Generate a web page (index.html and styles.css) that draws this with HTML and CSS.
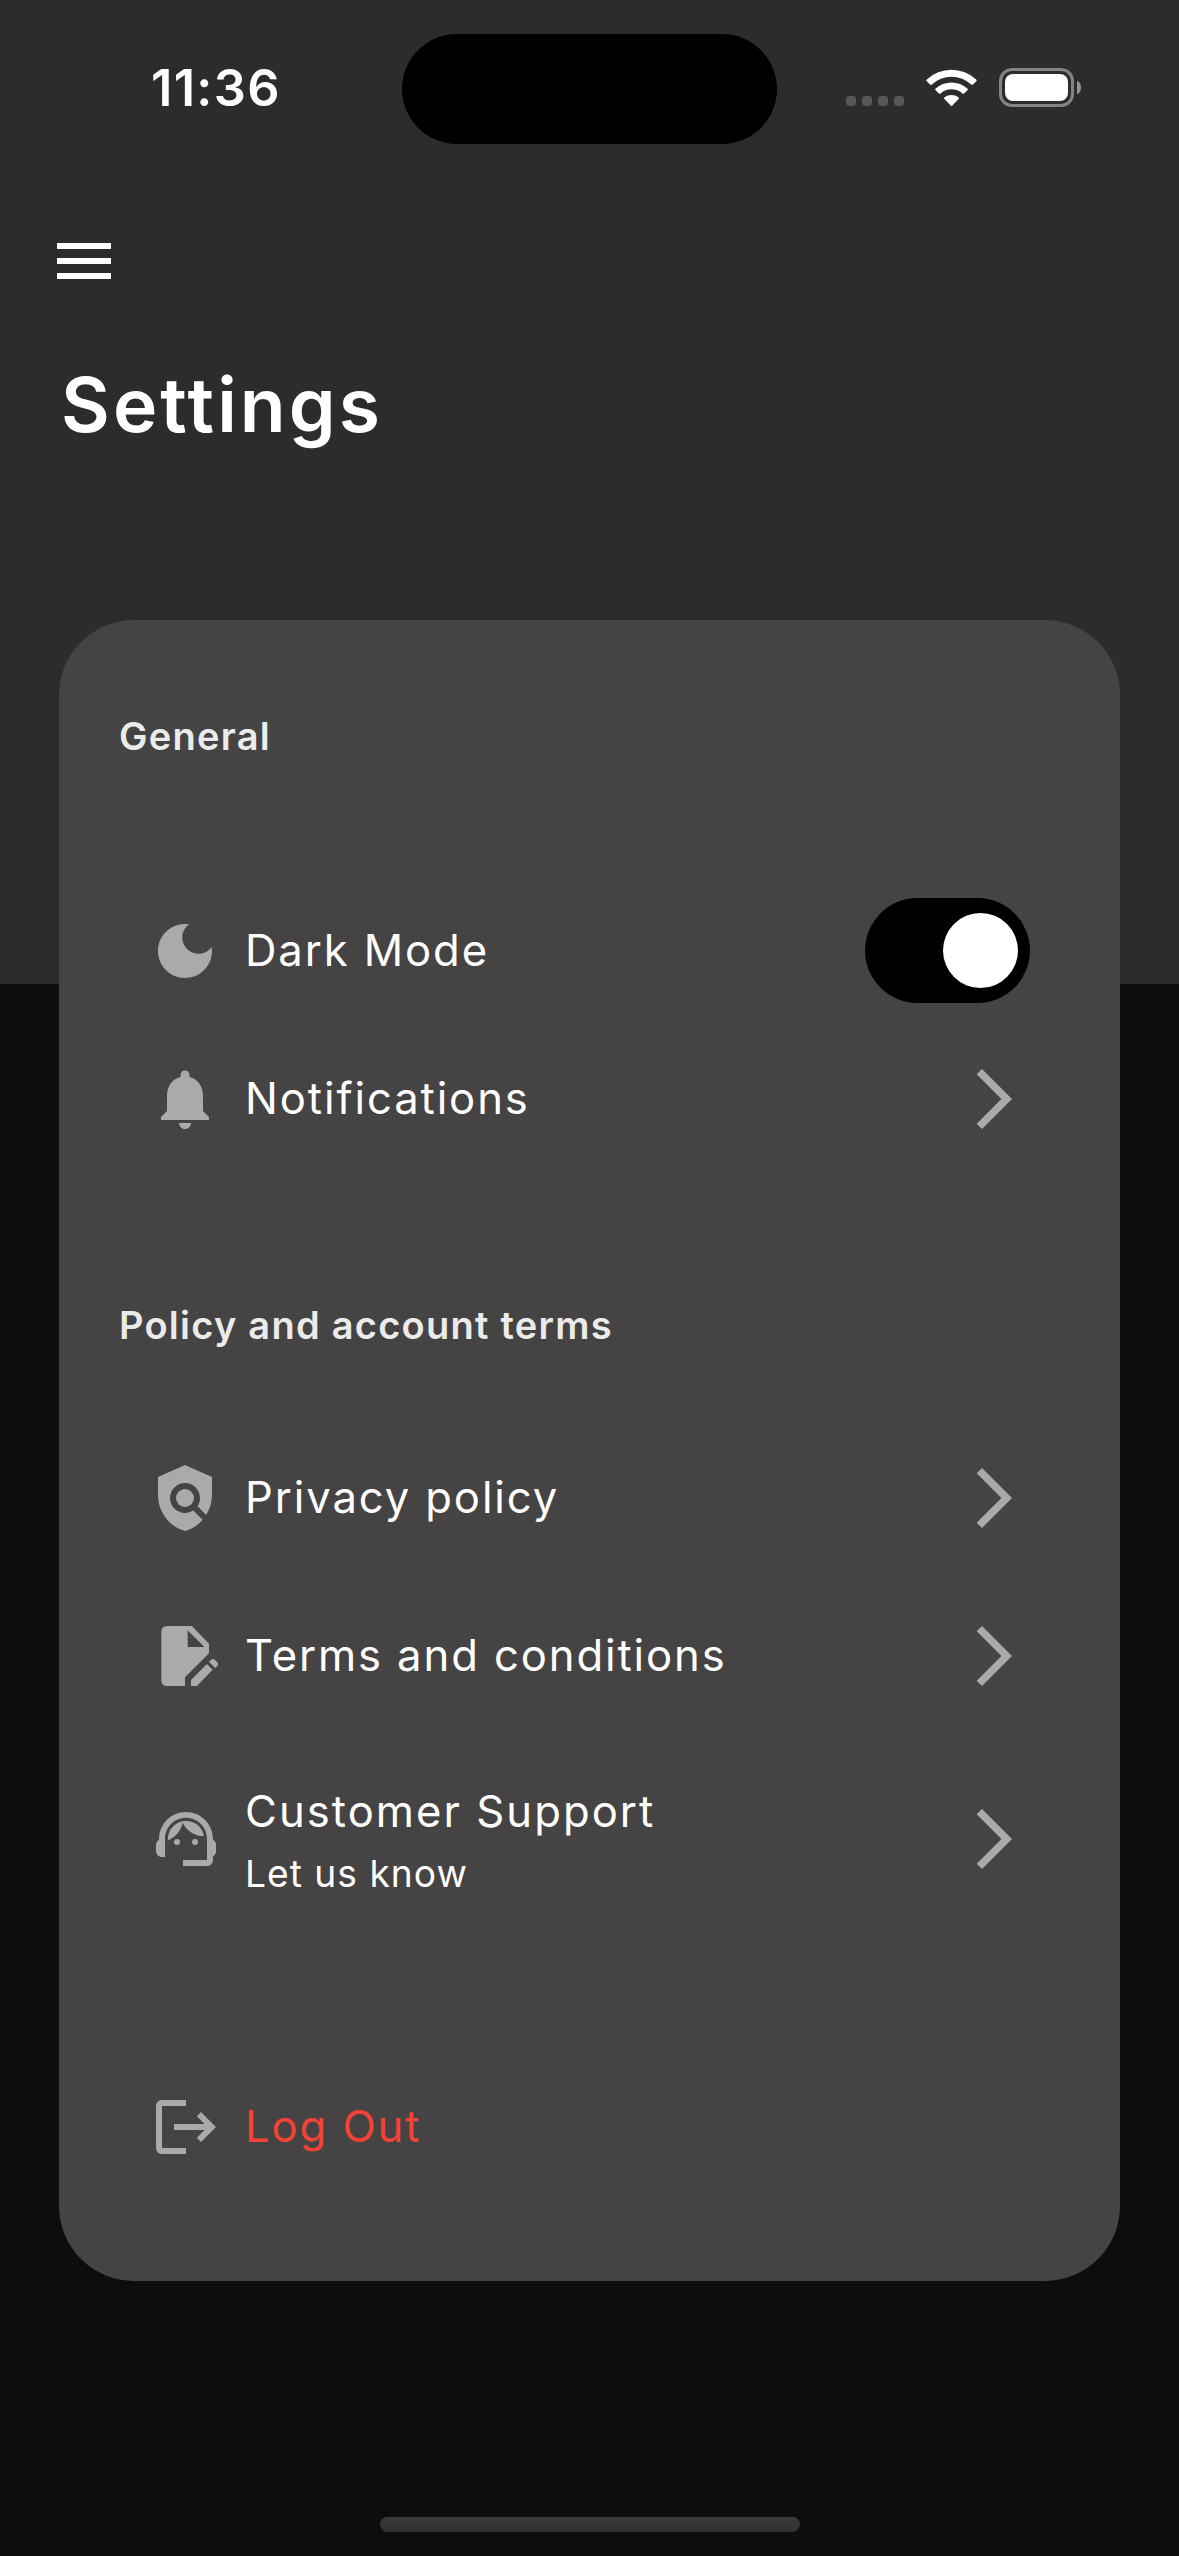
FILE: index.html
```html
<!DOCTYPE html>
<html lang="en">
<head>
<meta charset="utf-8">
<title>Settings</title>
<link rel="stylesheet" href="styles.css">
</head>
<body>
<div class="screen">
  <header class="status">
    <div class="time">11:36</div>
    <div class="island"></div>
    <div class="indicators">
      <div class="dots"><i></i><i></i><i></i><i></i></div>
      <svg class="wifi" viewBox="0 0 51 38">
        <path d="M.8 10.5a36.4 36.4 0 0 1 49.400 0q.9.9 0 1.800l-3.200 3.200q-.9.8-1.800 0a28.700 28.700 0 0 0-39.400 0q-.9.8-1.800 0l-3.200-3.200q-.9-.9 0-1.800z"/>
        <path d="M9.600 19.400a24 24 0 0 1 31.800 0q.9.9 0 1.800l-3.300 3.200q-.8.7-1.700 0a16.300 16.300 0 0 0-21.800 0q-.9.7-1.700 0l-3.300-3.200q-.9-.9 0-1.800z"/>
        <path d="M18.500 28.300a11.500 11.500 0 0 1 14 0q1 .9.100 1.800l-6.200 6.400q-.9.8-1.800 0l-6.200-6.400q-.9-.9.100-1.800z"/>
      </svg>
      <div class="battery"><div class="cell"><div class="charge"></div></div><div class="cap"></div></div>
    </div>
  </header>
  <svg class="menu" viewBox="0 0 24 24"><path d="M3 18h18v-2H3v2zm0-5h18v-2H3v2zm0-7v2h18V6H3z"/></svg>
  <h1 class="title">Settings</h1>
  <main class="card">
    <h2 class="section">General</h2>
    <div class="row dark-mode">
      <svg class="icon" viewBox="0 0 24 24"><path d="M12 3c-4.970 0-9 4.030-9 9s4.030 9 9 9 9-4.030 9-9c0-.46-.04-.92-.1-1.360-.98 1.370-2.580 2.260-4.400 2.260-2.980 0-5.400-2.420-5.400-5.400 0-1.810.89-3.420 2.260-4.400-.44-.06-.9-.1-1.360-.1z"/></svg>
      <span class="label">Dark Mode</span>
      <div class="toggle"><div class="knob"></div></div>
    </div>
    <div class="row notifications">
      <svg class="icon" viewBox="0 0 24 24"><path d="M12 22c1.100 0 2-.9 2-2h-4c0 1.100.89 2 2 2zm6-6v-5c0-3.070-1.640-5.640-4.500-6.320V4c0-.83-.67-1.500-1.500-1.500s-1.500.67-1.500 1.500v.68C7.630 5.360 6 7.920 6 11v5l-2 2v1h16v-1l-2-2z"/></svg>
      <span class="label">Notifications</span>
      <svg class="chevron" viewBox="0 0 24 24"><path d="M6.230 20.230 8 22 18 12 8 2 6.230 3.770 14.460 12z"/></svg>
    </div>
    <h2 class="section policy">Policy and account terms</h2>
    <div class="row privacy">
      <svg class="icon" viewBox="0 0 24 24"><path d="M21 5l-9-4-9 4v6c0 5.550 3.840 10.740 9 12 2.300-.56 4.330-1.900 5.880-3.710l-3.120-3.120c-1.940 1.290-4.580 1.070-6.290-.64-1.950-1.950-1.950-5.120 0-7.070 1.950-1.950 5.120-1.950 7.070 0 1.710 1.710 1.920 4.350.64 6.290l2.900 2.900C20.290 15.690 21 13.380 21 11V5z"/><circle cx="12" cy="12" r="3"/></svg>
      <span class="label">Privacy policy</span>
      <svg class="chevron" viewBox="0 0 24 24"><path d="M6.230 20.230 8 22 18 12 8 2 6.230 3.770 14.460 12z"/></svg>
    </div>
    <div class="row terms">
      <svg class="icon" viewBox="0 0 24 24"><path fill-rule="evenodd" d="M6.100 2H14.300L20 7.900V11.100L12 19.100V22H6.100Q4.100 22 4.100 20V4Q4.100 2 6.100 2zM12.900 3.500V9H18.500z"/><path d="M14 22V20L19.300 14.700 21.200 16.600 16 22zM20 13.900 20.600 13.300Q21.300 12.700 22 13.300L22.800 14.100Q23.300 14.800 22.800 15.300L22 16z"/></svg>
      <span class="label">Terms and conditions</span>
      <svg class="chevron" viewBox="0 0 24 24"><path d="M6.230 20.230 8 22 18 12 8 2 6.230 3.770 14.460 12z"/></svg>
    </div>
    <div class="row support">
      <svg class="icon shifted" viewBox="0 0 24 24"><path d="M21 12.220C21 6.730 16.740 3 12 3c-4.690 0-9 3.650-9 9.280-.6.340-1 .98-1 1.720v2c0 1.100.9 2 2 2h1v-6.100c0-3.870 3.130-7 7-7s7 3.130 7 7V19h-8v2h8c1.100 0 2-.9 2-2v-1.220c.59-.31 1-.92 1-1.640v-2.300c0-.7-.41-1.310-1-1.620z"/><circle cx="9" cy="13" r="1"/><circle cx="15" cy="13" r="1"/><path d="M18 11.030C17.520 8.180 15.040 6 12.050 6c-3.030 0-6.290 2.510-6.030 6.450 2.470-1.010 4.330-3.210 4.860-5.890 1.310 2.630 4 4.440 7.120 4.470z"/></svg>
      <div class="label stack"><span>Customer Support</span><small>Let us know</small></div>
      <svg class="chevron" viewBox="0 0 24 24"><path d="M6.230 20.230 8 22 18 12 8 2 6.230 3.770 14.460 12z"/></svg>
    </div>
    <div class="row logout">
      <svg class="icon shifted" viewBox="0 0 24 24"><path d="M17 7l-1.410 1.410L18.170 11H8v2h10.170l-2.580 2.580L17 17l5-5zM4 5h8V3H4c-1.100 0-2 .9-2 2v14c0 1.100.9 2 2 2h8v-2H4V5z"/></svg>
      <span class="label">Log Out</span>
    </div>
  </main>
  <div class="home-bar"></div>
</div>
</body>
</html>
```
FILE: styles.css
```css
* { box-sizing: border-box; }

body {
  margin: 0;
  background: #0d0d0d;
  color: #fff;
  font-family: Inter, "Liberation Sans", sans-serif;
}

.screen {
  display: flex;
  flex-direction: column;
  height: 2556px;
  background: linear-gradient(#2c2c2c 984px, #0d0d0d 984px);
}

svg { display: block; flex: none; fill: currentColor; }

.status {
  display: grid;
  grid-template-columns: 402px 375px 1fr;
  padding-top: 33px;
  height: 225px;
}
.time {
  padding-left: 151px;
  font-size: 50.5px;
  font-weight: 600;
  line-height: 110px;
  letter-spacing: 1.3px;
}
.island { height: 110px; margin-top: 1px; border-radius: 55px; background: #000; }
.indicators { display: flex; padding: 35px 0 0 69px; height: 74px; }
.dots { display: flex; gap: 6px; align-items: flex-end; padding-bottom: 1px; width: 80px; }
.dots i { width: 10px; height: 10px; border-radius: 3.5px; background: #585858; }
.wifi { width: 51px; height: 38px; margin-top: 1px; }
.battery { display: flex; align-items: center; gap: 3px; margin-left: 22px; }
.cell { width: 75px; height: 39px; padding: 3px; border: 3px solid #848484; border-radius: 13px; }
.charge { height: 27px; border-radius: 8px; background: #fff; }
.cap { width: 4px; height: 13px; border-radius: 0 4px 4px 0 / 0 6.5px 6.5px 0; background: #949494; }

.menu { width: 72px; height: 72px; margin-left: 48px; }
.title {
  margin: 60px 0 0 61px;
  font-size: 75px;
  font-weight: 580;
  line-height: 96px;
  letter-spacing: 3.1px;
}

.card {
  display: flex;
  flex-direction: column;
  width: 1061px;
  height: 1661px;
  margin: 167px 0 0 59px;
  padding: 92px 90px 0;
  border-radius: 75px;
  background: #454343;
}
.section {
  margin: 0 0 0 -30px;
  color: #ebebeb;
  font-size: 38px;
  font-weight: 570;
  line-height: 48px;
  letter-spacing: 1.25px;
}
.policy { margin-top: 142px; }

.row { display: flex; align-items: center; height: 120px; font-size: 43.6px; }
.icon { width: 72px; height: 72px; margin-right: 24px; color: #aaa; }
.shifted { margin-left: 1px; margin-right: 23px; }
.chevron { width: 72px; height: 72px; color: #aaa; }
.label { flex: 1; padding-bottom: 2px; letter-spacing: 1.9px; white-space: nowrap; }
.dark-mode { height: 121px; margin-top: 130px; }
.dark-mode .label { padding-bottom: 0; }
.notifications { margin-top: 28px; }
.privacy { margin-top: 89px; }
.terms { margin-top: 38px; }
.support { margin-top: 63px; }
.logout { margin-top: 168px; }
.logout .label { color: #f44336; }
.stack { display: flex; flex-direction: column; align-items: flex-start; gap: 11px; padding: 2px 0 0; line-height: 56px; letter-spacing: 2.05px; }
.stack small { font-size: 37.2px; line-height: 46px; letter-spacing: 1px; }

.toggle { display: flex; justify-content: flex-end; width: 165px; height: 105px; padding: 15px 12px; border-radius: 53px; background: #000; }
.knob { width: 75px; height: 75px; border-radius: 50%; background: #fff; }

.home-bar { width: 420px; height: 15px; margin: 236px 0 0 380px; border-radius: 8px; background: linear-gradient(#3a3a3a, #303030); }
```
